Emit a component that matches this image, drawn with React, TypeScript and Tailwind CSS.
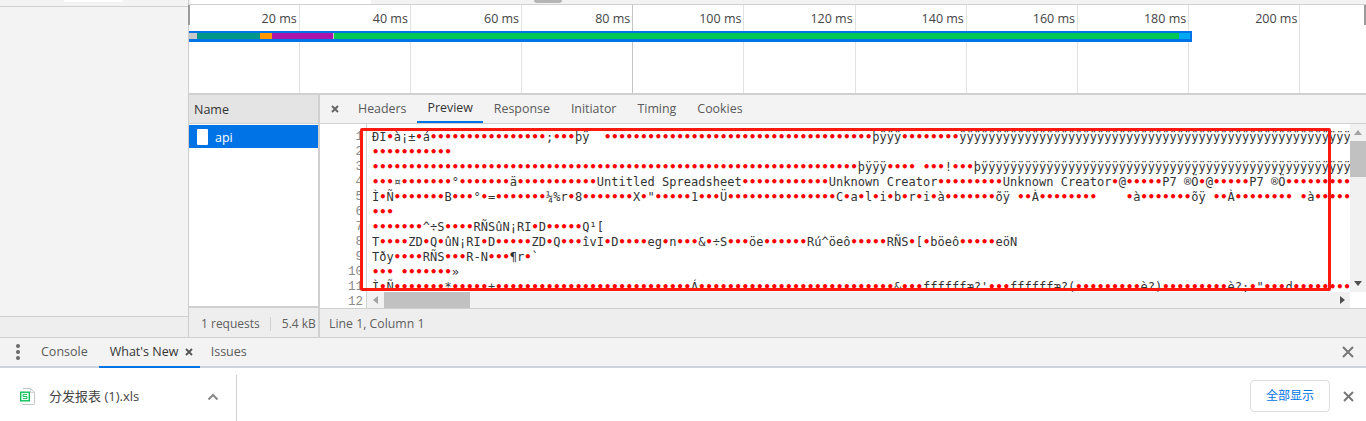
const ticks = ["20 ms", "40 ms", "60 ms", "80 ms", "100 ms", "120 ms", "140 ms", "160 ms", "180 ms", "200 ms"];
const tabs = ["Headers", "Preview", "Response", "Initiator", "Timing", "Cookies"];

const d = (n: number) => "•".repeat(n);
const y = (n: number) => "ÿ".repeat(n);

// binary garbage lines of the xls preview
const lines = [
  `ÐI•à¡±•á${d(16)};${d(3)}þÿ  ${d(37)}þÿÿÿ${d(8)}${y(54)}`,
  d(11),
  `${d(67)}þÿÿÿ${d(4)} ${d(3)}!${d(3)}þ${y(51)}`,
  `${d(3)}¤${d(7)}°${d(7)}ä${d(11)}Untitled Spreadsheet${d(12)}Unknown Creator${d(9)}Unknown Creator•@${d(5)}P7 ®Ö•@${d(5)}P7 ®Ö${d(9)}`,
  `Ì•Ñ${d(7)}B${d(3)}°•=${d(7)}¼%r•8${d(7)}X•"${d(5)}1${d(3)}Ü${d(15)}C•a•l•i•b•r•i•à${d(7)}õÿ ••À${d(8)}    •à${d(7)}õÿ ••À${d(8)} •à${d(5)}`,
  d(3),
  `${d(7)}^÷S${d(4)}RÑSûN¡RI•D${d(5)}Q¹[`,
  `T${d(4)}ZD•Q•ûN¡RI•D${d(5)}ZD•Q${d(3)}îvI•D${d(4)}eg•n${d(3)}&•÷S${d(3)}öe${d(6)}Rú^öeô${d(5)}RÑS•[•böeô${d(5)}eöN`,
  `Tðy${d(4)}RÑS${d(3)}R-N${d(3)}¶r•\``,
  `${d(3)} ${d(7)}»`,
  `Ì•Ñ${d(7)}*${d(5)}+${d(27)}Á${d(27)}&${d(3)}ffffffæ?'${d(3)}ffffffæ?(${d(9)}è?)${d(9)}è?;•"${d(3)}d${d(8)}`,
];

function Dots({ text }: { text: string }) {
  // bullets are the red control-char markers
  const parts = text.split(/(•+)/);
  return (
    <>
      {parts.map((p, i) =>
        p.startsWith("•") ? (
          <span key={i} className="text-[#ff0000] font-bold">
            {p}
          </span>
        ) : (
          <span key={i}>{p}</span>
        ),
      )}
    </>
  );
}

function Cross({ size, color, width = 2 }: { size: number; color: string; width?: number }) {
  return (
    <svg width={size} height={size} viewBox={`0 0 ${size} ${size}`} className="shrink-0">
      <path d={`M1 1L${size - 1} ${size - 1}M${size - 1} 1L1 ${size - 1}`} stroke={color} strokeWidth={width} fill="none" />
    </svg>
  );
}

function SheetIcon() {
  return (
    <svg width="15" height="17" viewBox="0 0 15 17" fill="none" className="shrink-0">
      <path d="M3 .5h7.5l4 4v11a1 1 0 0 1-1 1H3a1 1 0 0 1-1-1" stroke="#c4c4c4" />
      <path d="M10.5 .5v4h4" stroke="#d4d4d4" />
      <rect x=".7" y="4.2" width="8.6" height="8.6" stroke="#0fc15a" strokeWidth="1.4" fill="#fff" />
      <path d="M7.2 6.4H3v2.1h4v2.1H2.8" stroke="#0fc15a" />
    </svg>
  );
}

export default function App() {
  return (
    <div className="flex flex-col w-[1366px] h-[421px] overflow-hidden bg-white text-[#5a5a5a] text-[12px] font-['Open_Sans','Noto_Sans_CJK_SC',sans-serif]">
      <div className="flex h-[337px] shrink-0">
        {/* left strip */}
        <div className="w-[189px] shrink-0 flex flex-col bg-[#f3f3f3] border-r border-[#cdcdcd]">
          <div className="h-[7px] border-b border-[#d0d0d0] pl-[64px]">
            <div className="w-[59px] h-[2px] bg-white" />
          </div>
          <div className="h-[310px] border-b border-[#d0d0d0]" />
          <div className="flex-1 bg-[#eeeeee]" />
        </div>

        <div className="flex-1 flex flex-col min-w-0">
          {/* overview strip */}
          <div className="h-[5px] shrink-0 flex border-b border-[#d0d0d0] bg-[#f3f3f3]">
            <div className="w-[180px] ml-[2px] bg-white" />
            <div className="ml-[163px] w-[28px] h-[3px] rounded-b-[3px] bg-[#b5b5b5]" />
          </div>

          {/* timeline */}
          <div className="relative h-[90px] shrink-0 border-b-2 border-[#d0d0d0]">
            <div className="flex h-full ml-[-0.5px]">
              {ticks.map((t) => (
                <div
                  key={t}
                  className={`w-[111.2px] shrink-0 h-full border-r text-right pr-[2px] pt-[5px] text-[12.5px] leading-[17px] text-[#444] ${t === "80 ms" ? "border-[#c4c4c4]" : "border-[#e2e2e2]"}`}
                >
                  {t}
                </div>
              ))}
            </div>
            <div className="absolute left-[-1px] top-0 w-[2px] h-[20px] bg-[#9b9b9b]" />
            <div className="absolute right-0 top-0 w-[2px] h-[20px] bg-[#9b9b9b]" />
            {/* waterfall bar */}
            <div className="absolute left-0 top-[26px] w-[1003px] h-[11px] bg-[#0073e6] pt-[2px] pb-[3px] pr-[2px] flex">
              <div className="w-[8px] bg-[#c9c9c9]" />
              <div className="w-[63px] bg-[#009688]" />
              <div className="w-[12px] bg-[#ff9800]" />
              <div className="w-[61px] bg-[#a815a8]" />
              <div className="w-[1px] bg-[#c9c9c9]" />
              <div className="flex-1 bg-[#00c853]" />
              <div className="w-[11px] bg-[#03a9f4]" />
            </div>
          </div>

          {/* lower pane */}
          <div className="flex-1 flex min-h-0">
            {/* name column */}
            <div className="w-[131px] shrink-0 flex flex-col border-r-2 border-[#d0d0d0]">
              <div className="h-[29px] shrink-0 flex items-center pl-[5px] pt-[3px] bg-[#e4e4e4] border-b border-[#d0d0d0] text-[12.5px] text-[#333]">
                Name
              </div>
              <div className="mt-[1px] h-[23px] shrink-0 flex items-center gap-[7px] pl-[8px] bg-[#0073e6] text-white text-[12.5px]">
                <div className="w-[11px] h-[16px] bg-white rounded-[1px]" />
                <span className="pt-[3px]">api</span>
              </div>
              <div className="flex-1" />
              <div className="h-[31px] shrink-0 flex items-center pt-[2px] bg-[#eeeeee] border-t-2 border-[#d0d0d0] text-[#5f5f5f]">
                <div className="pl-[12px] pr-[10px] border-r border-[#d0d0d0] h-[14px] flex items-center">1 requests</div>
                <div className="pl-[11px]">5.4 kB</div>
              </div>
            </div>

            {/* preview column */}
            <div className="flex-1 flex flex-col min-w-0">
              <div className="h-[29px] shrink-0 flex items-center bg-[#f3f3f3] border-b border-[#d0d0d0]">
                <div className="ml-[11px] mr-[8.5px]">
                  <Cross size={8} color="#666" />
                </div>
                {tabs.map((t) => (
                  <div
                    key={t}
                    className={`h-full flex items-center px-[10.5px] pt-[1px] text-[12.4px] ${t === "Preview" ? "text-[#333] border-b-2 border-[#0073e6]" : "text-[#5a5a5a]"}`}
                  >
                    {t}
                  </div>
                ))}
              </div>

              <div className="relative flex-1 flex min-h-0 overflow-hidden">
                <div className="w-[47px] shrink-0 border-r border-[#d4d4d4] bg-white pr-[3px] pt-[6px] text-right font-['Liberation_Mono',monospace] text-[12.5px] leading-[15px] text-[#8a8a8a] overflow-hidden">
                  {[...Array(12).keys()].map((i) => (
                    <div key={i}>{i + 1}</div>
                  ))}
                </div>
                <div className="flex-1 min-w-0 overflow-hidden pl-[5px] pt-[6px] font-['DejaVu_Sans_Mono',monospace] text-[12px] tracking-[0.025px] leading-[15px] text-[#333] whitespace-pre">
                  {lines.map((l, i) => (
                    <div key={i}>
                      <Dots text={l} />
                    </div>
                  ))}
                </div>

                {/* vertical scrollbar */}
                <div className="absolute right-0 top-0 bottom-[16px] w-[16px] bg-[#f1f1f1] flex flex-col items-center">
                  <div className="h-[17px] flex items-center justify-center">
                    <div className="w-0 h-0 border-x-[4px] border-x-transparent border-b-[5px] border-b-[#a3a3a3]" />
                  </div>
                  <div className="w-full h-[36px] bg-[#c1c1c1]" />
                  <div className="flex-1" />
                  <div className="h-[17px] flex items-center justify-center">
                    <div className="w-0 h-0 border-x-[4px] border-x-transparent border-t-[5px] border-t-[#505050]" />
                  </div>
                </div>

                {/* horizontal scrollbar */}
                <div className="absolute left-[47px] right-[16px] bottom-0 h-[16px] bg-[#f1f1f1] flex items-center">
                  <div className="w-[17px] flex justify-center">
                    <div className="w-0 h-0 border-y-[4px] border-y-transparent border-r-[5px] border-r-[#a3a3a3]" />
                  </div>
                  <div className="w-[86px] h-full bg-[#c1c1c1]" />
                  <div className="flex-1" />
                  <div className="w-[16px] flex justify-center">
                    <div className="w-0 h-0 border-y-[4px] border-y-transparent border-l-[5px] border-l-[#505050]" />
                  </div>
                </div>

                {/* red annotation box */}
                <div className="absolute left-[40px] top-[4px] w-[971px] h-[163px] border-[3px] border-[#ff1a0d] rounded-[2px]" />
              </div>

              <div className="h-[29px] shrink-0 flex items-center pl-[9px] pt-[2px] bg-[#eeeeee] border-t border-[#d0d0d0] text-[12.3px] text-[#5f5f5f]">
                Line 1, Column 1
              </div>
            </div>
          </div>
        </div>
      </div>

      {/* drawer tabs */}
      <div className="h-[31px] shrink-0 flex items-center bg-[#f3f3f3] border-t border-[#d0d0d0] border-b-2 border-b-[#cfd3da] text-[12.5px]">
        <div className="w-[35px] flex flex-col items-center gap-[2px]">
          <span className="w-[4px] h-[4px] rounded-full bg-[#6a6a6a]" />
          <span className="w-[4px] h-[4px] rounded-full bg-[#6a6a6a]" />
          <span className="w-[4px] h-[4px] rounded-full bg-[#6a6a6a]" />
        </div>
        <div className="px-[6px] pt-[1px] text-[#5a5a5a]">Console</div>
        <div className="ml-[5px] w-[101px] h-[30px] -mb-[2px] flex items-center pl-[11px] gap-[7px] border-b-2 border-[#0073e6] text-[#333]">
          <span className="pt-[1px]">What's New</span>
          <Cross size={8} color="#555" width={1.8} />
        </div>
        <div className="pl-[11px] pt-[1px] text-[#5a5a5a]">Issues</div>
        <div className="ml-auto mr-[12px]">
          <Cross size={12} color="#777" />
        </div>
      </div>

      {/* download shelf */}
      <div className="flex-1 flex items-center min-h-0 pl-[20px] text-[13px] text-[#444]">
        <div className="w-[217px] h-[46px] shrink-0 flex items-center self-end border-r border-[#d0d0d0] pb-[3px]">
          <SheetIcon />
          <span className="ml-[14px]">分发报表 (1).xls</span>
          <svg width="12" height="8" viewBox="0 0 12 8" fill="none" className="ml-auto mr-[17px]">
            <path d="M1.5 6.5L6 2l4.5 4.5" stroke="#888" strokeWidth="2" />
          </svg>
        </div>
        <div className="flex-1" />
        <div className="w-[80px] h-[32px] mt-[3px] flex items-center justify-center border border-[#dadce0] rounded-[4px] text-[12px] text-[#0073e6]">
          全部显示
        </div>
        <div className="ml-[13px] mr-[12px] mt-[3px]">
          <Cross size={11} color="#777" />
        </div>
      </div>
    </div>
  );
}
